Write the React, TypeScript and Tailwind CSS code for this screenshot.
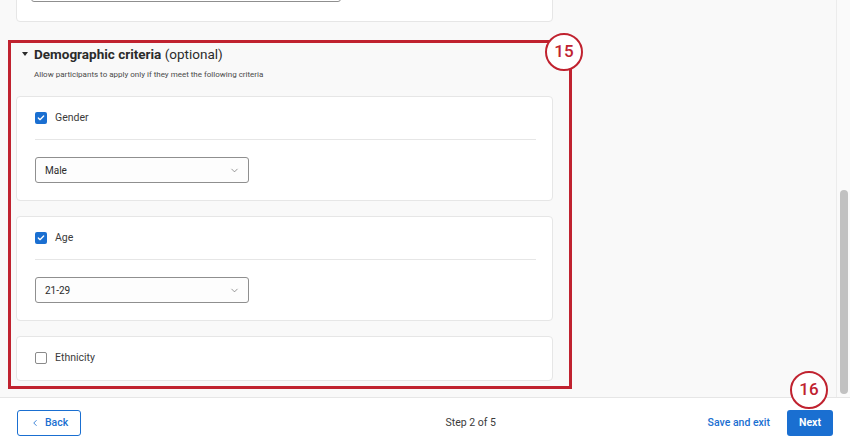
import { ChevronDown, ChevronLeft, Check } from "lucide-react";

type Criterion = { label: string; checked: boolean; value?: string };

const criteria: Criterion[] = [
  { label: "Gender", checked: true, value: "Male" },
  { label: "Age", checked: true, value: "21-29" },
  { label: "Ethnicity", checked: false },
];

function Checkbox({ checked }: { checked: boolean }) {
  if (checked) {
    return (
      <span className="flex h-[12px] w-[12px] items-center justify-center rounded-[2px] bg-[#1a6fd1]">
        <Check className="h-[8px] w-[8px] text-white" strokeWidth={4} />
      </span>
    );
  }
  return <span className="h-[12px] w-[12px] rounded-[2px] border border-[#8a8a8a] bg-white" />;
}

function CriterionCard({ item }: { item: Criterion }) {
  return (
    <div className="rounded-[4px] border border-[#e6e6e6] bg-white pl-[18px] pr-[16px] pt-[11px] pb-[12px]">
      <div className="flex h-[20px] items-center gap-[8px]">
        <Checkbox checked={item.checked} />
        <span className="text-[10.5px] text-[#3b3b3b]">{item.label}</span>
      </div>
      {item.value && (
        <>
          <div className="mt-[11px] h-px bg-[#e6e6e6]" />
          <div className="mt-[17px] mb-[5px] flex h-[26px] w-[214px] items-center justify-between rounded-[3px] border border-[#8f8f8f] bg-[#fdfdfd] pl-[9px] pr-[8px]">
            <span className="text-[10px] text-[#2b2b2b]">{item.value}</span>
            <ChevronDown className="h-[11px] w-[11px] text-[#6b6b6b]" strokeWidth={1.5} />
          </div>
        </>
      )}
    </div>
  );
}

function Marker({ n, className }: { n: number; className: string }) {
  return (
    <div
      className={`absolute flex h-[38px] w-[38px] items-center justify-center rounded-full border-[2.5px] border-[#c0222f] bg-white text-[17px] font-medium text-[#c0222f] ${className}`}
    >
      {n}
    </div>
  );
}

export default function App() {
  return (
    <div
      className="relative flex h-[447px] w-[850px] flex-col overflow-hidden bg-white"
      style={{ fontFamily: "Roboto, 'Open Sans', sans-serif" }}
    >
      <div className="flex h-[397px] bg-[#f9f9f9]">
        <div className="flex-1 overflow-hidden px-[16px]">
          <div className="w-[537px]">
            {/* previous card, scrolled out of view */}
            <div className="-mt-[40px] rounded-[4px] border border-[#e6e6e6] bg-white pl-[14px] pt-[10px] pb-[19px]">
              <div className="h-[31px] w-[310px] rounded-[3px] border border-[#8f8f8f] bg-white" />
            </div>

            <div className="relative mt-[18px] pt-[4px]">
              <div className="flex h-[20px] items-center gap-[6px] pl-[6px]">
                <span className="h-0 w-0 border-x-[3.5px] border-t-[4px] border-x-transparent border-t-[#2b2b2b]" />
                <span className="text-[13.5px] leading-[20px] text-[#2b2b2b]">
                  <span className="font-bold">Demographic criteria</span> (optional)
                </span>
              </div>
              <p className="mt-[5px] pl-[18px] text-[8px] leading-[12px] text-[#4a4a4a]">
                Allow participants to apply only if they meet the following criteria
              </p>
              <div className="mt-[15px] flex flex-col gap-[15px]">
                {criteria.map((c) => (
                  <CriterionCard key={c.label} item={c} />
                ))}
              </div>
              {/* annotation frame */}
              <div className="pointer-events-none absolute -left-[8px] -right-[19px] top-0 h-[349px] border-[3px] border-[#c0222f]" />
            </div>
          </div>
        </div>
        <div className="flex w-[14px] justify-center border-l border-[#ececec] bg-[#fafafa] pt-[190px]">
          <div className="h-[204px] w-[8px] rounded-full bg-[#c1c1c1]" />
        </div>
      </div>

      <div className="flex h-[50px] items-center border-t border-[#e6e6e6] bg-white px-[17px]">
        <button className="flex h-[26px] w-[64px] items-center justify-center gap-[5px] rounded-[3px] border border-[#1a6fd1] text-[10.5px] font-medium text-[#1a6fd1]">
          <ChevronLeft className="h-[10px] w-[10px]" strokeWidth={2} />
          Back
        </button>
        <div className="flex flex-1 justify-center pl-[153px] text-[10.5px] text-[#3b3b3b]">Step 2 of 5</div>
        <span className="text-[10.5px] font-medium text-[#1a6fd1]">Save and exit</span>
        <button className="ml-[17px] h-[26px] w-[46px] rounded-[3px] bg-[#1a6fd1] text-[10.5px] font-bold text-white">
          Next
        </button>
      </div>

      <Marker n={15} className="left-[545px] top-[33px]" />
      <Marker n={16} className="left-[790px] top-[371px]" />
    </div>
  );
}
